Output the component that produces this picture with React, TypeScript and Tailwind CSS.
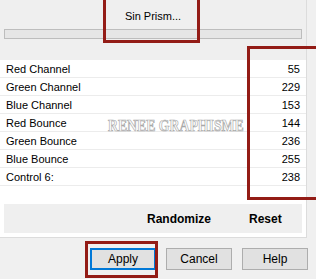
const rows = [
  { label: "Red Channel", value: 55 },
  { label: "Green Channel", value: 229 },
  { label: "Blue Channel", value: 153 },
  { label: "Red Bounce", value: 144 },
  { label: "Green Bounce", value: 236 },
  { label: "Blue Bounce", value: 255 },
  { label: "Control 6:", value: 238 },
];

export default function App() {
  return (
    <div className="relative w-[316px] h-[279px] overflow-hidden bg-[#f0f0f0] text-[11px] text-black [font-family:'Liberation_Sans',Arial,sans-serif]">
      {/* filter panel */}
      <div className="flex flex-col w-[307px] h-[238px] border-r border-b border-[#dcdcdc] bg-white">
        <div className="flex flex-col h-[60px] bg-[#efefef] px-[4px]">
          <div className="h-[29px] pt-[9px] text-center leading-[14px]">Sin Prism...</div>
          <div className="h-[10px] border border-[#bdbdbd] bg-[#e6e6e6]" />
        </div>

        <div className="flex flex-col h-[143px]">
          {rows.map((r) => (
            <div
              key={r.label}
              className="flex items-center justify-between h-[18px] px-[6px] border-b border-[#ececec] leading-[14px]"
            >
              <span>{r.label}</span>
              <span>{r.value}</span>
            </div>
          ))}
        </div>

        <div className="flex items-center h-[29px] mx-[4px] mt-[1px] bg-[#efefef] text-[12px] font-bold">
          <span className="ml-[143px]">Randomize</span>
          <span className="ml-[38px]">Reset</span>
        </div>
      </div>

      {/* dialog buttons */}
      <div className="flex gap-[10px] ml-[90px] mt-[10px]">
        <button className="w-[66px] h-[22px] border-2 border-[#0078d7] bg-[#e1e1e1] text-[12px]">Apply</button>
        <button className="w-[66px] h-[22px] border border-[#adadad] bg-[#e1e1e1] text-[12px]">Cancel</button>
        <button className="w-[66px] h-[22px] border border-[#adadad] bg-[#e1e1e1] text-[12px]">Help</button>
      </div>

      {/* watermark */}
      <div className="absolute left-[108px] top-[114px] origin-left scale-x-[0.86] text-[16px] font-bold text-white [font-family:'Liberation_Serif',serif] [-webkit-text-stroke:0.7px_#a8a8a8] pointer-events-none whitespace-nowrap">
        RENEE GRAPHISME
      </div>

      {/* annotation boxes */}
      <div className="absolute left-[103px] top-[-4px] w-[97px] h-[47px] border-[3px] border-[#931c16]" />
      <div className="absolute left-[247px] top-[46px] w-[80px] h-[154px] border-[3px] border-[#931c16]" />
      <div className="absolute left-[85px] top-[241px] w-[73px] h-[37px] border-[3px] border-[#931c16]" />
    </div>
  );
}
